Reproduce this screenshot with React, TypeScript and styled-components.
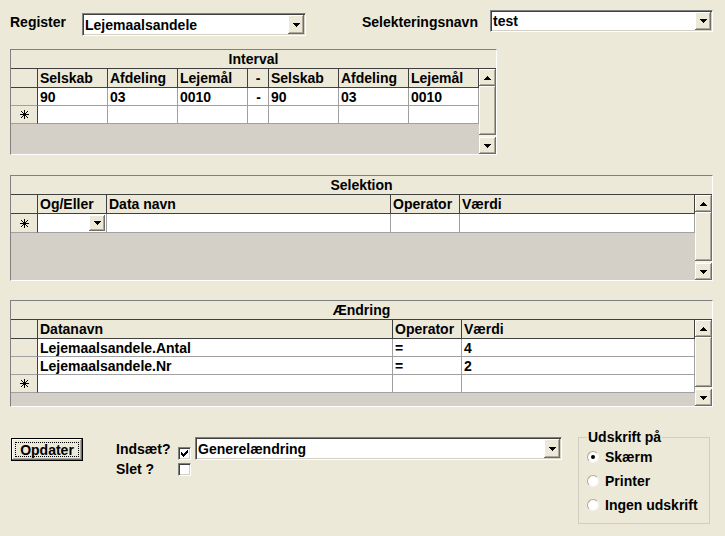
import React from "react";
import styled, { createGlobalStyle, css } from "styled-components";

const Global = createGlobalStyle`
  html, body { margin: 0; padding: 0; background: #ECE9D8; }
  body {
    font-family: "Liberation Sans", Arial, sans-serif;
    font-size: 14px;
    font-weight: bold;
    color: #000;
  }
  * { box-sizing: border-box; }
`;

const raised = css`
  background: #ECE9D8;
  box-shadow: inset -1px -1px #716F64, inset 1px 1px #fff, inset -2px -2px #ACA899;
`;

const sunken = css`
  border: 1px solid;
  border-color: #808080 #fff #fff #808080;
  box-shadow: inset 1px 1px #404040, inset -1px -1px #D4D0C8;
`;

const Page = styled.div`
  width: 725px;
  height: 536px;
  padding-left: 10px;
  display: flex;
  flex-direction: column;
`;

const TopRow = styled.div`
  display: flex;
  align-items: flex-start;
  height: 49px;
  flex: none;
`;

const Label = styled.span<{ $w?: number; $mt?: number; $ml?: number }>`
  display: block;
  width: ${(p) => (p.$w ? `${p.$w}px` : "auto")};
  margin-top: ${(p) => p.$mt ?? 0}px;
  margin-left: ${(p) => p.$ml ?? 0}px;
  line-height: 16px;
  white-space: nowrap;
`;

const Combo = styled.div<{ $w: number; $h: number; $mt?: number; $ml?: number }>`
  ${sunken};
  width: ${(p) => p.$w}px;
  height: ${(p) => p.$h}px;
  margin-top: ${(p) => p.$mt ?? 0}px;
  margin-left: ${(p) => p.$ml ?? 0}px;
  background: #fff;
  display: flex;
  align-items: stretch;
  padding: 1px;
  flex: none;
`;

const ComboText = styled.span`
  flex: 1;
  display: flex;
  align-items: center;
  padding-left: 1px;
  line-height: 16px;
  white-space: nowrap;
  overflow: hidden;
`;

const ArrowBtn = styled.div<{ $w?: number; $h?: number }>`
  ${raised};
  width: ${(p) => p.$w ?? 16}px;
  ${(p) => (p.$h ? `height: ${p.$h}px;` : "")}
  flex: none;
  display: flex;
  align-items: center;
  justify-content: center;
`;

const Frame = styled.div<{ $w: number; $h: number; $mt: number }>`
  width: ${(p) => p.$w}px;
  height: ${(p) => p.$h}px;
  margin-top: ${(p) => p.$mt}px;
  flex: none;
  border: 1px solid;
  border-color: #808080 #fff #fff #808080;
  display: flex;
  flex-direction: column;
  background: #D4D0C8;
`;

const TitleBar = styled.div`
  height: 19px;
  flex: none;
  background: #ECE9D8;
  border-bottom: 1px solid #404040;
  display: flex;
  align-items: center;
  justify-content: center;
  line-height: 16px;
`;

const Body = styled.div`
  flex: 1;
  display: flex;
  min-height: 0;
`;

const Table = styled.div`
  flex: 1;
  display: flex;
  flex-direction: column;
`;

const Row = styled.div<{ $h: number }>`
  display: flex;
  height: ${(p) => p.$h}px;
  flex: none;
`;

type Kind = "head" | "data" | "sel" | "selhead";

const Cell = styled.div<{ $w: number; $kind: Kind; $center?: boolean; $end?: boolean }>`
  width: ${(p) => p.$w}px;
  flex: none;
  display: flex;
  align-items: center;
  justify-content: ${(p) => (p.$end ? "flex-end" : p.$center ? "center" : "flex-start")};
  padding: 0 ${(p) => (p.$kind === "data" ? "1px 0 2px" : "2px")};
  overflow: hidden;
  white-space: nowrap;
  line-height: 16px;
  background: ${(p) => (p.$kind === "data" ? "#fff" : "#ECE9D8")};
  border-right: 1px solid ${(p) => (p.$kind === "data" ? "#A0A0A0" : "#404040")};
  border-bottom: 1px solid
    ${(p) => (p.$kind === "head" || p.$kind === "selhead" ? "#404040" : "#A0A0A0")};
`;

const ScrollBar = styled.div`
  width: 17px;
  flex: none;
  display: flex;
  flex-direction: column;
  background: #F4F3EC;
`;

const ScrollBtn = styled.div`
  ${raised};
  height: 17px;
  flex: none;
  display: flex;
  align-items: center;
  justify-content: center;
`;

const Thumb = styled.div`
  ${raised};
  flex: 1;
  margin-bottom: 2px;
`;

const BottomRow = styled.div`
  display: flex;
  align-items: flex-start;
  margin-top: 22px;
`;

const PushButton = styled.div`
  ${raised};
  width: 72px;
  height: 23px;
  margin-top: 9px;
  margin-left: 1px;
  border: 1px solid #000;
  padding: 3px;
  display: flex;
  flex: none;
`;

const FocusRing = styled.span`
  flex: 1;
  border: 1px dotted #000;
  display: flex;
  align-items: center;
  justify-content: center;
  line-height: 14px;
`;

const Options = styled.div`
  margin-left: 33px;
  margin-top: 8px;
  display: grid;
  grid-template-columns: 62px 13px 371px;
  grid-template-rows: 23px 16px;
  flex: none;
`;

const OptLabel = styled.span<{ $mt?: number }>`
  line-height: 16px;
  align-self: ${(p) => (p.$mt !== undefined ? "start" : "center")};
  margin-top: ${(p) => p.$mt ?? 0}px;
  white-space: nowrap;
`;

const CheckBox = styled.div<{ $end?: boolean; $mt?: number }>`
  ${sunken};
  width: 13px;
  height: 13px;
  background: #fff;
  align-self: ${(p) => (p.$end ? "end" : "start")};
  margin-top: ${(p) => p.$mt ?? 0}px;
  display: flex;
  align-items: center;
  justify-content: center;
`;

const GroupBox = styled.fieldset`
  margin: 0 0 0 16px;
  width: 132px;
  border: 1px solid #D0D0BF;
  padding: 0 8px 6px 8px;
  min-width: 0;
  flex: none;
`;

const Legend = styled.legend`
  padding: 0 1px;
  line-height: 16px;
  white-space: nowrap;
`;

const RadioRow = styled.div`
  height: 24px;
  display: flex;
  align-items: center;
  gap: 6px;
  white-space: nowrap;
  line-height: 16px;
`;

const Radio = styled.span<{ $on?: boolean }>`
  width: 12px;
  height: 12px;
  border-radius: 50%;
  background: #fff;
  border: 1px solid;
  border-color: #ACA899 #F4F3EE #F4F3EE #ACA899;
  display: flex;
  align-items: center;
  justify-content: center;
  flex: none;
  &::after {
    content: "";
    display: ${(p) => (p.$on ? "block" : "none")};
    width: 4px;
    height: 4px;
    border-radius: 50%;
    background: #000;
  }
`;

const DownArrow = () => (
  <svg width="7" height="4" viewBox="0 0 7 4" shapeRendering="crispEdges">
    <path d="M0 0h7v1H0zM1 1h5v1H1zM2 2h3v1H2zM3 3h1v1H3z" fill="#000" />
  </svg>
);

const UpArrow = () => (
  <svg width="7" height="4" viewBox="0 0 7 4" shapeRendering="crispEdges">
    <path d="M3 0h1v1H3zM2 1h3v1H2zM1 2h5v1H1zM0 3h7v1H0z" fill="#000" />
  </svg>
);

const Star = () => (
  <svg width="9" height="9" viewBox="0 0 9 9" shapeRendering="crispEdges">
    <path
      d="M4 0h1v9H4zM0 4h9v1H0zM1 1h1v1H1zM2 2h1v1H2zM3 3h1v1H3zM5 5h1v1H5zM6 6h1v1H6zM7 7h1v1H7zM7 1h1v1H7zM6 2h1v1H6zM5 3h1v1H5zM3 5h1v1H3zM2 6h1v1H2zM1 7h1v1H1z"
      fill="#000"
    />
  </svg>
);

const Check = () => (
  <svg width="7" height="7" viewBox="0 0 7 7" shapeRendering="crispEdges">
    <path
      d="M6 0h1v1H6zM5 1h2v1H5zM0 2h1v1H0zM4 2h3v1H4zM0 3h2v1H0zM3 3h3v1H3zM0 4h5v1H0zM1 5h3v1H1zM2 6h1v1H2z"
      fill="#000"
    />
  </svg>
);

type Col = { title: string; w: number; center?: boolean };

type GridProps = {
  title: string;
  width: number;
  height: number;
  mt: number;
  rowH: number;
  cols: Col[];
  rows: string[][];
  dropCol?: number;
};

const DataGrid: React.FC<GridProps> = ({ title, width, height, mt, rowH, cols, rows, dropCol }) => (
  <Frame $w={width} $h={height} $mt={mt}>
    <TitleBar>{title}</TitleBar>
    <Body>
      <Table>
        <Row $h={19}>
          <Cell $w={27} $kind="selhead" />
          {cols.map((c, i) => (
            <Cell key={i} $w={c.w} $kind="head" $center={c.center}>
              {c.title}
            </Cell>
          ))}
        </Row>
        {rows.map((r, ri) => (
          <Row key={ri} $h={rowH}>
            <Cell $w={27} $kind="sel" $center />
            {cols.map((c, ci) => (
              <Cell key={ci} $w={c.w} $kind="data" $center={c.center}>
                {r[ci]}
              </Cell>
            ))}
          </Row>
        ))}
        <Row $h={rowH}>
          <Cell $w={27} $kind="sel" $center>
            <Star />
          </Cell>
          {cols.map((c, ci) =>
            ci === dropCol ? (
              <Cell key={ci} $w={c.w} $kind="data" $end>
                <ArrowBtn $w={16} $h={16}>
                  <DownArrow />
                </ArrowBtn>
              </Cell>
            ) : (
              <Cell key={ci} $w={c.w} $kind="data" />
            )
          )}
        </Row>
      </Table>
      <ScrollBar>
        <ScrollBtn>
          <UpArrow />
        </ScrollBtn>
        <Thumb />
        <ScrollBtn>
          <DownArrow />
        </ScrollBtn>
      </ScrollBar>
    </Body>
  </Frame>
);

const intervalCols: Col[] = [
  { title: "Selskab", w: 70 },
  { title: "Afdeling", w: 70 },
  { title: "Lejemål", w: 70 },
  { title: "-", w: 21, center: true },
  { title: "Selskab", w: 70 },
  { title: "Afdeling", w: 70 },
  { title: "Lejemål", w: 70 },
];

const selektionCols: Col[] = [
  { title: "Og/Eller", w: 69 },
  { title: "Data navn", w: 284 },
  { title: "Operator", w: 69 },
  { title: "Værdi", w: 235 },
];

const aendringCols: Col[] = [
  { title: "Datanavn", w: 355 },
  { title: "Operator", w: 69 },
  { title: "Værdi", w: 233 },
];

export default function App() {
  return (
    <>
      <Global />
      <Page>
        <TopRow>
          <Label $w={72} $mt={14}>
            Register
          </Label>
          <Combo $w={224} $h={23} $mt={13}>
            <ComboText>Lejemaalsandele</ComboText>
            <ArrowBtn>
              <DownArrow />
            </ArrowBtn>
          </Combo>
          <Label $w={128} $mt={14} $ml={56}>
            Selekteringsnavn
          </Label>
          <Combo $w={223} $h={22} $mt={10}>
            <ComboText>test</ComboText>
            <ArrowBtn>
              <DownArrow />
            </ArrowBtn>
          </Combo>
        </TopRow>

        <DataGrid
          title="Interval"
          width={487}
          height={106}
          mt={0}
          rowH={18}
          cols={intervalCols}
          rows={[["90", "03", "0010", "-", "90", "03", "0010"]]}
        />

        <DataGrid
          title="Selektion"
          width={703}
          height={106}
          mt={20}
          rowH={19}
          cols={selektionCols}
          rows={[]}
          dropCol={0}
        />

        <DataGrid
          title="Ændring"
          width={703}
          height={107}
          mt={19}
          rowH={18}
          cols={aendringCols}
          rows={[
            ["Lejemaalsandele.Antal", "=", "4"],
            ["Lejemaalsandele.Nr", "=", "2"],
          ]}
        />

        <BottomRow>
          <PushButton>
            <FocusRing>Opdater</FocusRing>
          </PushButton>
          <Options>
            <OptLabel>Indsæt?</OptLabel>
            <CheckBox $end>
              <Check />
            </CheckBox>
            <Combo $w={367} $h={23} $ml={4}>
              <ComboText>Generelændring</ComboText>
              <ArrowBtn>
                <DownArrow />
              </ArrowBtn>
            </Combo>
            <OptLabel $mt={1}>Slet ?</OptLabel>
            <CheckBox $mt={3} />
          </Options>
          <GroupBox>
            <Legend>Udskrift på</Legend>
            <RadioRow>
              <Radio $on />
              Skærm
            </RadioRow>
            <RadioRow>
              <Radio />
              Printer
            </RadioRow>
            <RadioRow>
              <Radio />
              Ingen udskrift
            </RadioRow>
          </GroupBox>
        </BottomRow>
      </Page>
    </>
  );
}
